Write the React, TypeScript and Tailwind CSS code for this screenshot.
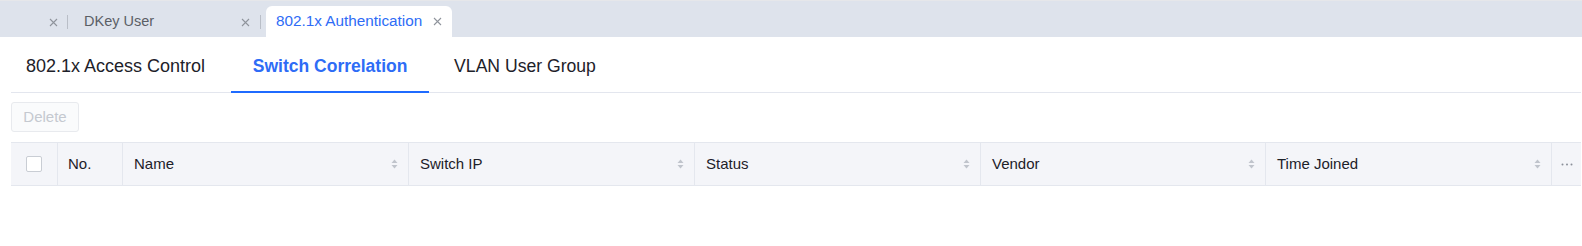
import React from "react";

const font = { fontFamily: '"Liberation Sans", Arial, sans-serif' };

function CloseX({ className = "" }: { className?: string }) {
  return (
    <svg width="9" height="9" viewBox="0 0 9 9" className={className}>
      <path d="M1 1L8 8M8 1L1 8" stroke="currentColor" strokeWidth="1.1" fill="none" />
    </svg>
  );
}

function SortIcon() {
  return (
    <svg width="7" height="10" viewBox="0 0 7 10" className="text-[#c0c4cc]">
      <path d="M3.5 0.5L6.5 4H0.5Z" fill="currentColor" />
      <path d="M3.5 9.5L6.5 6H0.5Z" fill="currentColor" />
    </svg>
  );
}

const cols = [
  { name: "Name", w: "w-[286px]" },
  { name: "Switch IP", w: "w-[286px]" },
  { name: "Status", w: "w-[286px]" },
  { name: "Vendor", w: "w-[285px]" },
  { name: "Time Joined", w: "w-[286px]" },
];

export default function App() {
  return (
    <div className="w-[1582px] h-[246px] bg-white overflow-hidden" style={font}>
      {/* top tab bar */}
      <div className="h-[37px] bg-[#dee3ec] border-t border-[#e6e7ea] flex items-end">
        <div className="w-[67px] h-[30px] flex items-center justify-end pr-[9px] text-[#8f949c]">
          <CloseX />
        </div>
        <div className="w-px h-[14px] bg-[#b9bec7] mb-[8px]" />
        <div className="w-[6px]" />
        <div className="w-[186px] h-[30px] flex items-center pl-[10px] pr-[10px] justify-between">
          <span className="text-[14.5px] text-[#5b5f66]">DKey User</span>
          <span className="text-[#8f949c] flex"><CloseX /></span>
        </div>
        <div className="w-px h-[14px] bg-[#b9bec7] mb-[8px]" />
        <div className="w-[5px]" />
        <div className="w-[186px] h-[31px] bg-white rounded-t-[6px] flex items-center pl-[10px] pr-[10px] justify-between">
          <span className="text-[15.3px] text-[#2e6cf6]">802.1x Authentication</span>
          <span className="text-[#8f949c] flex"><CloseX /></span>
        </div>
      </div>

      <div className="pl-[11px] pr-[1px]">
        {/* sub tabs */}
        <div className="flex gap-[4px] border-b border-[#e3e6ee] h-[56px] pt-[3px]">
          <div className="h-[52px] pl-[15px] pr-[22px] flex items-center text-[18px] text-[#1d2129]">
            802.1x Access Control
          </div>
          <div className="relative h-[52px] flex items-center text-[17.5px] font-bold text-[#2e6cf6] w-[198px] justify-center">
            Switch Correlation
            <div className="absolute left-0 right-0 bottom-[-1px] h-[2px] bg-[#1f6bff]" />
          </div>
          <div className="h-[52px] px-[21px] flex items-center text-[17.6px] text-[#1d2129]">
            VLAN User Group
          </div>
        </div>

        {/* delete button */}
        <div className="pt-[9px]">
          <button className="w-[68px] h-[30px] border border-[#e8eaee] bg-[#fafbfc] rounded-[3px] text-[15px] text-[#c5c9d0] flex items-center justify-center">
            Delete
          </button>
        </div>

        {/* table header */}
        <div className="mt-[10px] flex h-[44px] bg-[#f4f5f9] border-t border-b border-[#e4e7ee] text-[15px] text-[#1d2129]">
          <div className="w-[47px] border-r border-[#e4e7ee] flex items-center justify-center">
            <div className="w-[16px] h-[16px] bg-white border border-[#c9cdd4] rounded-[2px]" />
          </div>
          <div className="w-[65px] border-r border-[#e4e7ee] flex items-center pl-[10px]">No.</div>
          {cols.map((c) => (
            <div
              key={c.name}
              className={`${c.w} border-r border-[#e4e7ee] flex items-center justify-between pl-[11px] pr-[10px]`}
            >
              <span>{c.name}</span>
              <SortIcon />
            </div>
          ))}
          <div className="w-[29px] flex items-center justify-center">
            <svg width="12" height="3" viewBox="0 0 12 3" className="text-[#8a8f99]">
              <circle cx="1.5" cy="1.5" r="1" fill="currentColor" />
              <circle cx="6" cy="1.5" r="1" fill="currentColor" />
              <circle cx="10.5" cy="1.5" r="1" fill="currentColor" />
            </svg>
          </div>
        </div>
      </div>
    </div>
  );
}
